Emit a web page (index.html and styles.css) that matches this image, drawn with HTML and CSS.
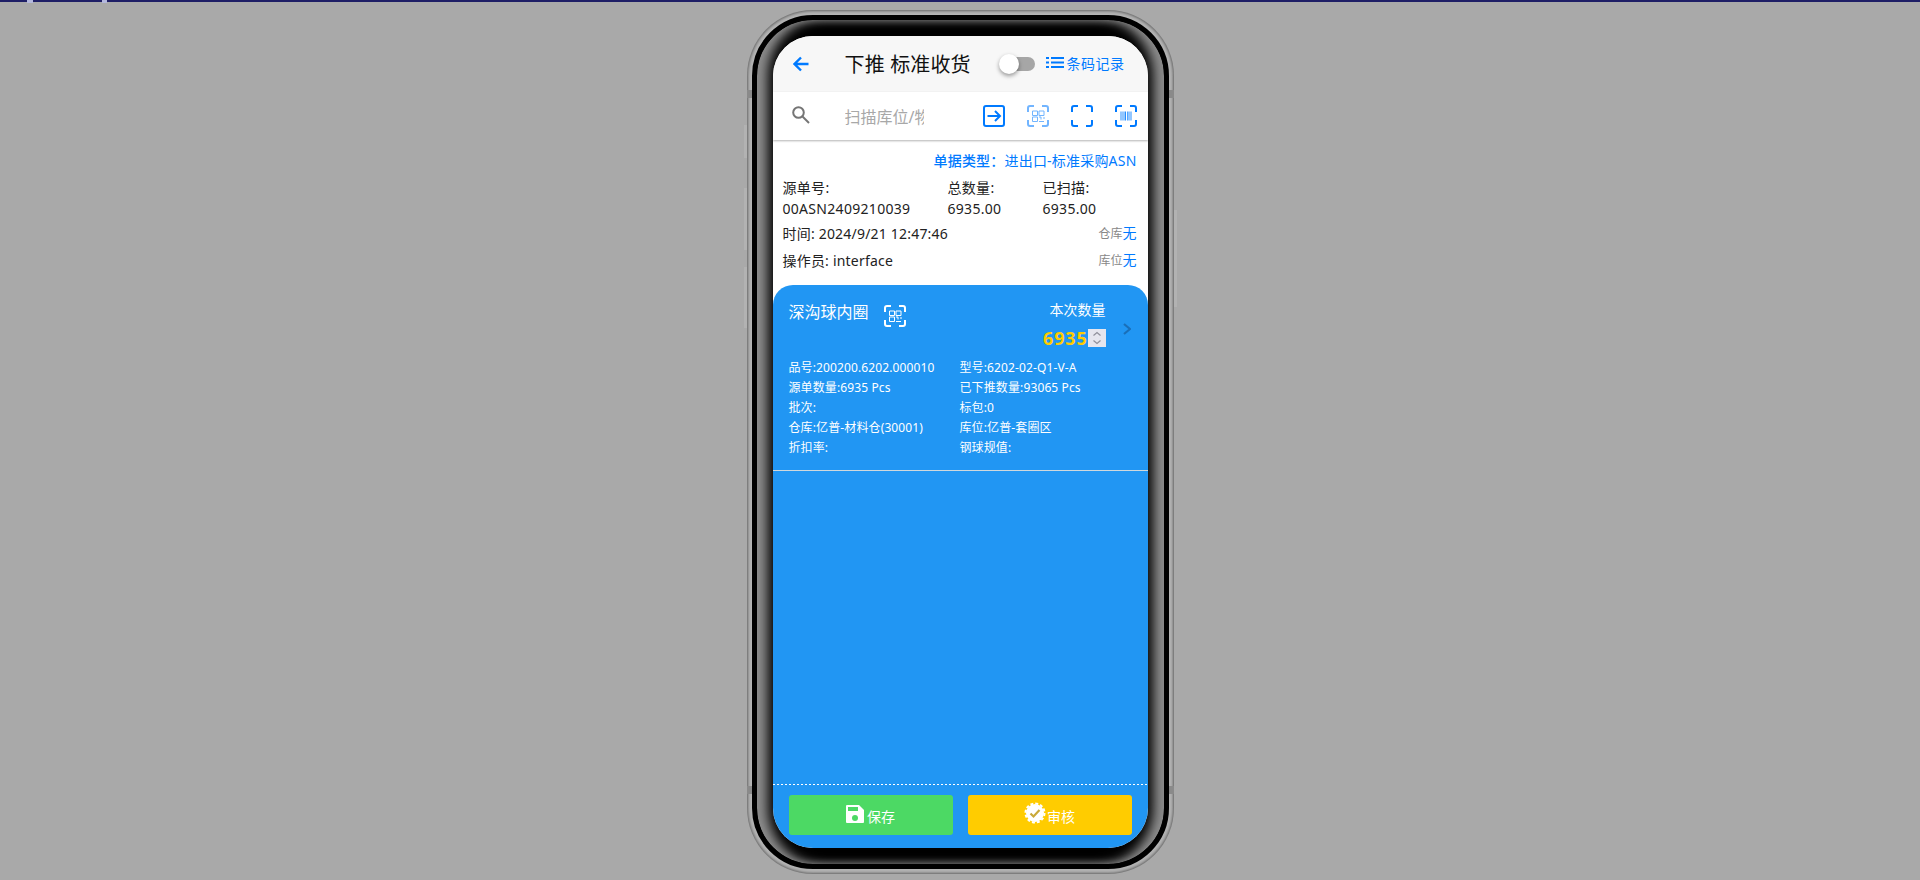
FILE: index.html
```html
<!DOCTYPE html>
<html lang="zh-CN">
<head>
<meta charset="utf-8">
<title>下推 标准收货</title>
<link rel="stylesheet" href="styles.css">
</head>
<body>
<div class="topstrip"><span class="spot spot-a"></span><span class="spot spot-b"></span></div>
<main class="stage">
  <div class="phone">
    <span class="side side-l1"></span><span class="side side-l2"></span><span class="side side-l3"></span><span class="side side-r1"></span>
    <span class="band band-tl"></span><span class="band band-tr"></span><span class="band band-bl"></span><span class="band band-br"></span>
    <div class="bezel">
      <div class="screen">
        <header class="nav">
          <svg class="back" viewBox="0 0 16 16"><path d="M15.500 8H1.500M8 1.500 1.500 8 8 14.500"/></svg>
          <h1 class="title">下推 标准收货</h1>
          <div class="toggle"><span class="knob"></span></div>
          <a class="records">
            <svg class="listicon" viewBox="0 0 18 11"><path d="M0 0h3v2H0zM5 0h13v2H5zM0 4.500h3v2H0zM5 4.500h13v2H5zM0 9h3v2H0zM5 9h13v2H5z"/></svg>
            <span>条码记录</span>
          </a>
        </header>
        <div class="searchbar">
          <svg class="searchicon" viewBox="0 0 18 18"><circle cx="6.500" cy="6.500" r="5.300"/><path d="M10.500 10.500 17 17"/></svg>
          <div class="placeholder">扫描库位/物料</div>
          <div class="tools">
            <svg class="tool" viewBox="0 0 22 22"><rect x="1" y="1" width="20" height="20" rx="2"/><path d="M4.500 11h12.500M12 6l5 5-5 5"/></svg>
            <svg class="tool tool-dim" viewBox="0 0 22 22"><path d="M1 7V3a2 2 0 0 1 2-2h4M15 1h4a2 2 0 0 1 2 2v4M21 15v4a2 2 0 0 1-2 2h-4M7 21H3a2 2 0 0 1-2-2v-4"/><path class="thin" d="M5.500 6h5v4.500h-5zM12 6h5v4.500h-5zM5.500 12h5v4.500h-5zM12 12h2v2.500M17 12v2M12 16.500h5"/></svg>
            <svg class="tool" viewBox="0 0 22 22"><path d="M1 7V3a2 2 0 0 1 2-2h4M15 1h4a2 2 0 0 1 2 2v4M21 15v4a2 2 0 0 1-2 2h-4M7 21H3a2 2 0 0 1-2-2v-4"/></svg>
            <svg class="tool" viewBox="0 0 22 22"><path d="M1 7V3a2 2 0 0 1 2-2h4M15 1h4a2 2 0 0 1 2 2v4M21 15v4a2 2 0 0 1-2 2h-4M7 21H3a2 2 0 0 1-2-2v-4"/><path class="bars" d="M5.500 6.500h1v9h-1zM7.500 6.500h1v9h-1zM9.500 6.500h1.500v9H9.500zM12 6.500h.8v9H12zM13.500 6.500h1v9h-1zM15.500 6.500h1v9h-1z"/></svg>
          </div>
        </div>
        <section class="info">
          <div class="doctype"><b>单据类型：</b>进出口-标准采购ASN</div>
          <div class="stats">
            <div>源单号:<br>00ASN2409210039</div>
            <div>总数量:<br>6935.00</div>
            <div>已扫描:<br>6935.00</div>
          </div>
          <div class="meta"><span>时间: 2024/9/21 12:47:46</span><span class="pick"><small>仓库</small>无</span></div>
          <div class="meta"><span>操作员: interface</span><span class="pick"><small>库位</small>无</span></div>
        </section>
        <section class="card">
          <div class="card-head">
            <div class="name">深沟球内圈</div>
            <svg class="qr" viewBox="0 0 22 22"><path d="M1 7V3a2 2 0 0 1 2-2h4M15 1h4a2 2 0 0 1 2 2v4M21 15v4a2 2 0 0 1-2 2h-4M7 21H3a2 2 0 0 1-2-2v-4"/><path class="thin" d="M5.500 6h5v4.500h-5zM12 6h5v4.500h-5zM5.500 12h5v4.500h-5zM12 12h2v2.500M17 12v2M12 16.500h5"/></svg>
            <div class="qty">
              <div class="qty-label">本次数量</div>
              <div class="qty-row">
                <span class="qty-num">6935</span>
                <span class="spin"><svg viewBox="0 0 18 18"><path d="M5.500 6.500 9 3.500l3.500 3M5.500 11.500 9 14.500l3.500-3"/></svg></span>
              </div>
            </div>
            <svg class="chev" viewBox="0 0 8 12"><path d="M1 1l6 5-6 5"/></svg>
          </div>
          <div class="details">
            <div>品号:200200.6202.000010</div><div>型号:6202-02-Q1-V-A</div>
            <div>源单数量:6935 Pcs</div><div>已下推数量:93065 Pcs</div>
            <div>批次:</div><div>标包:0</div>
            <div>仓库:亿普-材料仓(30001)</div><div>库位:亿普-套圈区</div>
            <div>折扣率:</div><div>钢球规值:</div>
          </div>
          <div class="spacer"></div>
          <footer class="actions">
            <button class="btn btn-save">
              <svg class="save" viewBox="0 0 18 18"><path class="w" d="M1 0h12l5 5v12a1 1 0 0 1-1 1H1a1 1 0 0 1-1-1V1a1 1 0 0 1 1-1z"/><path class="g" d="M2 2h10v4H2z"/><circle class="g" cx="9" cy="13" r="3"/></svg>
              <span>保存</span>
            </button>
            <button class="btn btn-audit">
              <svg class="badge" viewBox="0 0 22 22"><circle class="w" cx="11" cy="11" r="9"/><circle class="teeth" cx="11" cy="11" r="9.500"/><path class="tick" d="M6.500 11.500l3 3 6-6.500"/></svg>
              <span>审核</span>
            </button>
          </footer>
        </section>
      </div>
    </div>
  </div>
</main>
</body>
</html>
```

FILE: styles.css
```css
* { box-sizing: border-box; }
html, body { margin: 0; height: 100%; }
body {
  height: 880px;
  overflow: hidden;
  background: #a9a9a9;
  font-family: "Noto Sans", "Noto Sans CJK SC", sans-serif;
  font-size: 14px;
  color: #222;
}
.topstrip { height: 2px; background: #1e1e66; position: relative; }
.spot { position: absolute; top: 0; height: 3px; background: #b4b8dc; }
.spot-a { left: 27px; width: 6px; }
.spot-b { left: 102px; width: 5px; }
.stage { display: flex; justify-content: center; padding-top: 8px; }

.phone {
  position: relative;
  width: 427px;
  height: 864px;
  padding: 5px;
  border-radius: 66px;
  background: #b4b4b4;
  box-shadow: inset 0 0 3px 1px #626262;
}
.side { position: absolute; width: 3px; background: #b2b2b2; }
.side-l1 { left: -3px; top: 115px; height: 33px; }
.side-l2 { left: -3px; top: 178px; height: 62px; }
.side-l3 { left: -3px; top: 257px; height: 61px; }
.side-r1 { right: -3px; top: 200px; height: 97px; }
.band { position: absolute; width: 5px; height: 8px; background: #8a8a8a; }
.band-tl { left: 0; top: 80px; }
.band-tr { right: 0; top: 80px; }
.band-bl { left: 0; top: 776px; }
.band-br { right: 0; top: 776px; }

.bezel {
  height: 100%;
  padding: 16px;
  border: 5px solid #000;
  border-radius: 61px;
  background: #000;
  box-shadow:
    inset 14px 0 12px -3px #8c8c8c,
    inset -14px 0 12px -3px #8c8c8c,
    inset 0 0 7px #3a3a3a;
}
.screen {
  display: flex;
  flex-direction: column;
  height: 812px;
  border-radius: 40px;
  overflow: hidden;
  background: #fff;
}

.nav {
  flex: none;
  display: flex;
  align-items: center;
  height: 56px;
  padding-left: 20px;
  background: #f7f7f7;
}
.back { width: 16px; height: 16px; margin-top: -1px; fill: none; stroke: #007aff; stroke-width: 2.400; }
.title { margin: 2px 0 0 36px; font-size: 20px; font-weight: 400; line-height: 28px; letter-spacing: .15px; color: #111; white-space: nowrap; width: 149px; }
.toggle { position: relative; width: 35px; height: 14px; margin-left: 6px; border-radius: 7px; background: #a6a6a6; }
.knob {
  position: absolute;
  left: -1px; top: -3px;
  width: 20px; height: 20px;
  border-radius: 50%;
  background: #fff;
  box-shadow: 0 2px 4px rgba(0,0,0,.4);
}
.records { display: flex; align-items: center; margin-left: 11px; color: #007aff; font-size: 14px; }
.records span { margin: -2px 0 0 3px; letter-spacing: .5px; }
.listicon { width: 18px; height: 11px; margin-top: -4px; fill: #007aff; }

.searchbar {
  flex: none;
  position: relative;
  display: flex;
  align-items: center;
  height: 48px;
  padding-left: 19px;
  background: #fff;
  box-shadow: 0 1px 2px rgba(0,0,0,.3);
}
.searchicon { width: 18px; height: 18px; margin-top: -3px; fill: none; stroke: #757575; stroke-width: 2; }
.placeholder { width: 79px; margin-left: 35px; overflow: hidden; white-space: nowrap; color: #a8a8a8; font-size: 16px; }
.tools { display: flex; gap: 22px; margin-left: 59px; }
.tool { width: 22px; height: 22px; fill: none; stroke: #007aff; stroke-width: 2; }
.tool-dim { opacity: .55; }
.thin { stroke-width: 1; }
.bars { fill: #007aff; stroke: none; opacity: .85; }

.info { flex: none; height: 145px; padding: 11px 11px 0 10px; background: #fff; line-height: 20px; letter-spacing: .2px; }
.doctype { text-align: right; color: #007aff; }
.doctype b { font-weight: 500; }
.stats { display: grid; grid-template-columns: 165px 95px 1fr; margin-top: 6px; line-height: 21px; letter-spacing: .3px; }
.meta { display: flex; justify-content: space-between; align-items: center; margin-top: 6px; }
.stats + .meta { margin-top: 4px; }
.pick { color: #007aff; letter-spacing: 0; }
.pick small { font-size: 12px; color: #888; }

.card {
  flex: 1;
  display: flex;
  flex-direction: column;
  min-height: 0;
  border-radius: 20px 20px 0 0;
  background: #2196f3;
  color: #fff;
}
.card-head { flex: none; display: flex; align-items: flex-start; height: 73px; padding: 15px 17px 0 16px; }
.name { font-size: 16px; line-height: 24px; }
.qr { width: 22px; height: 22px; margin: 5px 0 0 15px; fill: none; stroke: #fff; stroke-width: 2; }
.qty { display: flex; flex-direction: column; align-items: flex-end; margin-left: auto; }
.qty-label { line-height: 20px; }
.qty-row { display: flex; align-items: center; margin-top: 9px; height: 18px; }
.qty-num { color: #ffcc00; font-size: 18px; font-weight: 700; letter-spacing: .8px; }
.spin { width: 18px; height: 18px; background: #e6e6ee; }
.spin svg { display: block; width: 18px; height: 18px; fill: none; stroke: #8f8f9a; stroke-width: 1.200; }
.chev { width: 8px; height: 12px; margin: 23px 0 0 17px; fill: none; stroke: #1a6fb8; stroke-width: 2.200; }

.details {
  flex: none;
  display: grid;
  grid-template-columns: 171px 1fr;
  grid-auto-rows: 20px;
  padding: 0 16px 12px;
  border-bottom: 1px solid #cfd8dc;
  font-size: 12px;
  line-height: 20px;
  letter-spacing: .12px;
}
.spacer { flex: 1; }
.actions {
  flex: none;
  display: flex;
  gap: 15px;
  height: 64px;
  padding: 11px 16px 13px;
  background: repeating-linear-gradient(90deg, #fff 0 2px, transparent 2px 4px) top left / 100% 1px no-repeat;
}
.btn {
  flex: 1;
  display: flex;
  justify-content: center;
  align-items: center;
  gap: 3px;
  border: 0;
  padding: 0;
  border-radius: 3px;
  color: #fff;
  font: inherit;
}
.btn span { margin-top: 1px; }
.btn-save { background: #4cd964; }
.btn-audit { background: #ffcc00; gap: 1px; }
.save { width: 18px; height: 18px; margin-top: -3px; }
.save .w, .badge .w { fill: #fff; }
.save .g { fill: #4cd964; }
.badge { width: 22px; height: 22px; margin-top: -4px; }
.teeth { fill: none; stroke: #fff; stroke-width: 2; stroke-dasharray: 2.970 2; }
.tick { fill: none; stroke: #c9a93a; stroke-width: 2.200; }
```
